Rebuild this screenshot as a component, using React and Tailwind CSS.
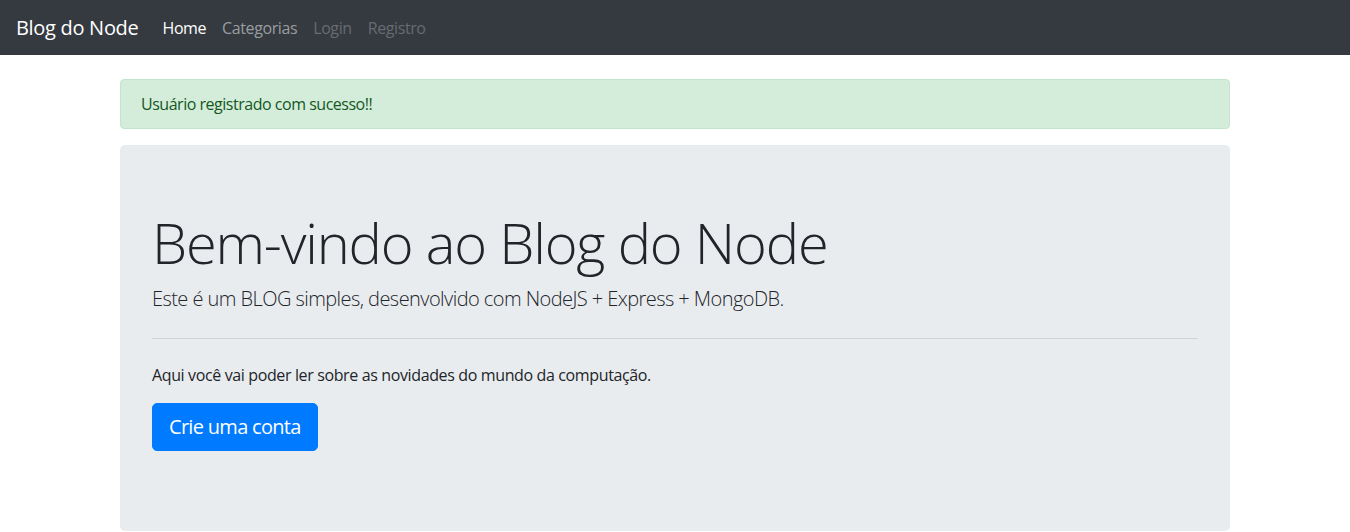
import React from 'react';

const font = { fontFamily: '"Open Sans", "Noto Sans", sans-serif' };

function Navbar() {
  return (
    <nav className="flex h-[55px] items-center bg-[#343a40] px-4">
      <a href="#" className="mr-4 text-[20px] leading-[30px] tracking-[-0.015em] text-white">Blog do Node</a>
      <ul className="flex items-center text-[16px] tracking-[-0.025em]">
        <li><a href="#" className="block px-2 py-2 text-white">Home</a></li>
        <li><a href="#" className="block px-2 py-2 text-[#9a9da0]">Categorias</a></li>
        <li><a href="#" className="block px-2 py-2 text-[#676b70]">Login</a></li>
        <li><a href="#" className="block px-2 py-2 text-[#676b70]">Registro</a></li>
      </ul>
    </nav>
  );
}

function App() {
  return (
    <div className="min-h-screen bg-white text-[#212529]" style={font}>
      <Navbar />
      <div className="mx-auto max-w-[1140px] px-[15px]">
        <div className="mt-6 mb-4 rounded border border-[#c3e6cb] bg-[#d4edda] px-5 py-3 text-[16px] leading-6 tracking-[-0.03em] text-[#155724]">
          Usuário registrado com sucesso!!
        </div>

        <div className="rounded-[5px] bg-[#e9ecef] px-8 py-16">
          <h1 className="mb-2 text-[56px] font-light leading-[1.2] tracking-[-0.021em]">Bem-vindo ao Blog do Node</h1>
          <p className="text-[20px] font-light leading-[30px] tracking-[-0.028em]">
            Este é um BLOG simples, desenvolvido com NodeJS + Express + MongoDB.
          </p>
          <hr className="my-6 border-t border-[#cfd3d6]" />
          <p className="mb-4 text-[16px] leading-6 tracking-[-0.023em]">Aqui você vai poder ler sobre as novidades do mundo da computação.</p>
          <p className="mb-4">
            <a href="#" className="inline-block rounded-[5px] border border-[#007bff] bg-[#007bff] px-4 py-2 text-[20px] leading-[30px] tracking-[-0.035em] text-white">
              Crie uma conta
            </a>
          </p>
        </div>
      </div>
    </div>
  );
}

export default App;
